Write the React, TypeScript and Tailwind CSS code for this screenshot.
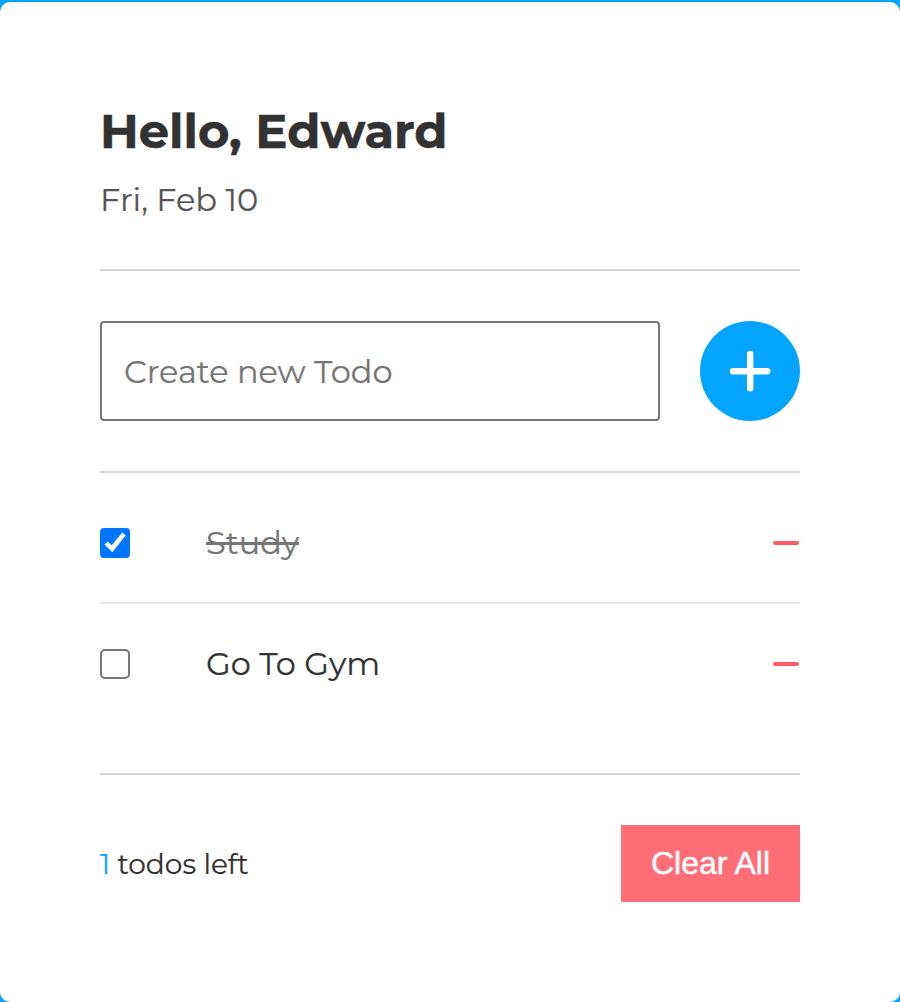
import { useState } from "react";

type Todo = { id: number; title: string; done: boolean };

const initialTodos: Todo[] = [
  { id: 1, title: "Study", done: true },
  { id: 2, title: "Go To Gym", done: false },
];

function Checkbox({ checked, onClick }: { checked: boolean; onClick: () => void }) {
  return (
    <button
      type="button"
      role="checkbox"
      aria-checked={checked}
      onClick={onClick}
      className={
        checked
          ? "size-[30px] shrink-0 rounded-[4px] bg-[#0075ff]"
          : "size-[30px] shrink-0 rounded-[5px] border-2 border-[#767676] bg-white"
      }
    >
      {checked && (
        <svg viewBox="0 0 30 30" className="block size-[30px]" fill="#fff">
          <path d="M4.5 16.6L7.6 13.5L11.8 17.3L22.2 4.4L25.7 7.5L12.3 24.2Z" />
        </svg>
      )}
    </button>
  );
}

export default function App() {
  const [todos, setTodos] = useState(initialTodos);
  const [draft, setDraft] = useState("");
  const left = todos.filter((t) => !t.done).length;

  const add = () => {
    if (!draft.trim()) return;
    setTodos([...todos, { id: Date.now(), title: draft.trim(), done: false }]);
    setDraft("");
  };
  const toggle = (id: number) =>
    setTodos(todos.map((t) => (t.id === id ? { ...t, done: !t.done } : t)));

  return (
    <div className="h-[1002px] bg-[#05a5ff] pt-0.5 font-['Montserrat','Inter',sans-serif] text-[#323232] [-webkit-text-stroke:0.2px_currentColor]">
      <main className="flex h-[1000px] flex-col rounded-[10px] bg-white px-[100px] pt-[100px]">
        <header className="h-[169px] border-b-2 border-[#d3d3d3]">
          <h1 className="h-[58px] text-[48px] leading-[58px] font-bold whitespace-nowrap [-webkit-text-stroke:0.5px_currentColor]">
            Hello, Edward
          </h1>
          <p className="mt-[20px] h-[40px] text-[32px] leading-[40px] text-[#555]">
            Fri, Feb 10
          </p>
        </header>

        <section className="flex h-[202px] items-center justify-between border-b-2 border-[#d3d3d3]">
          <input
            value={draft}
            onChange={(e) => setDraft(e.target.value)}
            placeholder="Create new Todo"
            className="h-[100px] w-[560px] rounded-[4px] border-2 border-[#767676] px-[22px] text-[32px] outline-none placeholder:text-[#757575]"
          />
          <button
            type="button"
            aria-label="Add"
            onClick={add}
            className="flex size-[100px] items-center justify-center rounded-full bg-[#05a5ff]"
          >
            <svg viewBox="0 0 42 42" className="size-[42px]" fill="none">
              <path d="M21.2 4V38.2M4 21.2H38.2" stroke="#fff" strokeWidth="6.4" strokeLinecap="round" />
            </svg>
          </button>
        </section>

        <ul className="h-[302px] border-b-2 border-[#d3d3d3] pt-[10px]">
          {todos.map((t) => (
            <li
              key={t.id}
              className="flex h-[121px] items-center border-b-2 border-[#e8e8e8] last:border-transparent"
            >
              <Checkbox checked={t.done} onClick={() => toggle(t.id)} />
              <span
                className={
                  t.done
                    ? "ml-[76px] text-[32px] text-[#757575] line-through decoration-[3px] [-webkit-text-stroke:0.2px_#757575]"
                    : "ml-[76px] text-[32px]"
                }
              >
                {t.title}
              </span>
              <button
                type="button"
                aria-label="Remove"
                onClick={() => setTodos(todos.filter((x) => x.id !== t.id))}
                className="mr-px ml-auto h-1 w-[26px] rounded-full bg-[#ff5a65]"
              />
            </li>
          ))}
        </ul>

        <footer className="mt-[50px] flex h-[77px] items-center justify-between">
          <p className="text-[28px]">
            <span className="text-[#05a5ff] [-webkit-text-stroke:0.2px_#05a5ff]">{left}</span> todos left
          </p>
          <button
            type="button"
            onClick={() => setTodos([])}
            className="h-[77px] w-[179px] bg-[#ff6e76] pb-0.5 font-['Liberation_Sans',Arial,sans-serif] text-[32px] whitespace-nowrap text-white [-webkit-text-stroke:0.5px_white]"
          >
            Clear All
          </button>
        </footer>
      </main>
    </div>
  );
}
